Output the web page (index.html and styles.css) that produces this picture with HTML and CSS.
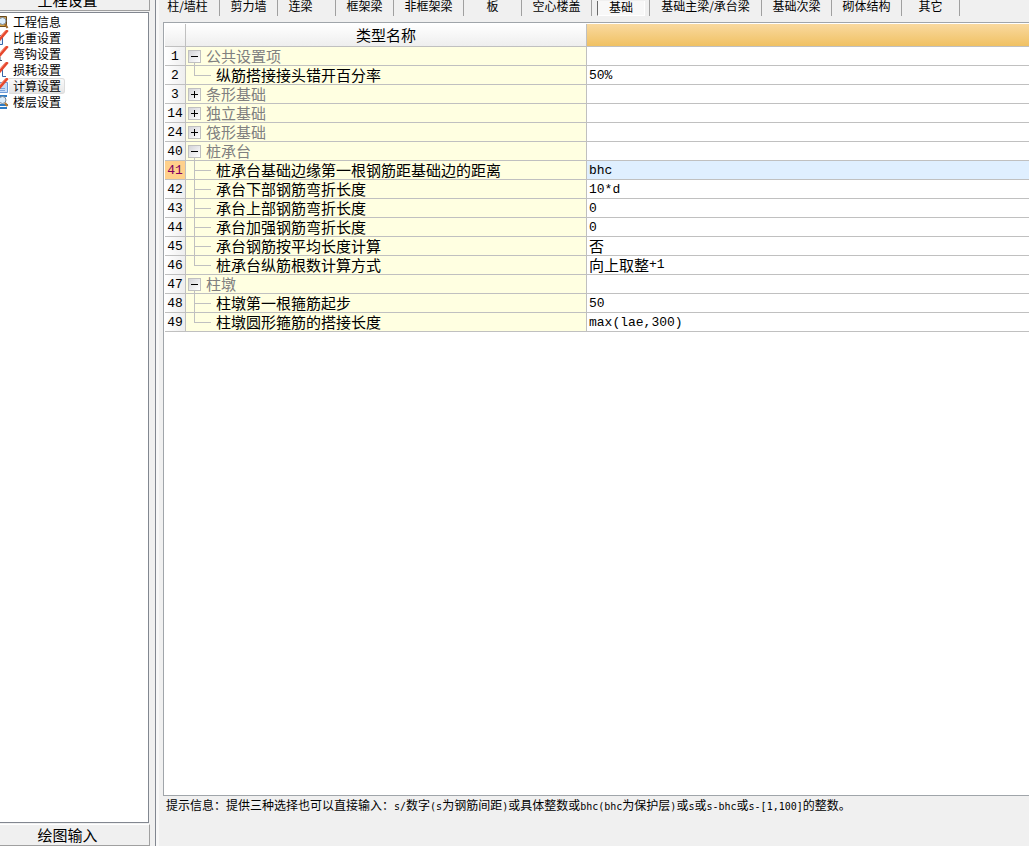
FILE: index.html
```
<!DOCTYPE html>
<html lang="zh-CN">
<head>
<meta charset="utf-8">
<title>工程设置</title>
<link rel="stylesheet" href="styles.css">
</head>
<body>
<div class="app">
  <aside class="sidebar">
    <button class="section-button section-top" type="button">工程设置</button>
    <nav class="side-list">
      <a class="side-item" href="#"><svg class="icon" viewBox="0 0 9 16"><path d="M-1 2.500h7.500v10H-1z" fill="#d8a64a" stroke="#6a4a1c"/><circle cx="2.500" cy="7" r="3.500" fill="#d9ecfb" stroke="#7c8795"/><path d="M5 10l2.500 4" stroke="#a06a28" stroke-width="2"/></svg><span>工程信息</span></a>
      <a class="side-item" href="#"><svg class="icon" viewBox="0 0 9 16"><path d="M-1 5.500h3.500v9H-1" fill="#e8f1fd" stroke="#3566a8"/><path d="M-1 10L7.500 0" stroke="#e6472d" stroke-width="3"/><path d="M-1 8l7-8" stroke="#f9a08a"/></svg><span>比重设置</span></a>
      <a class="side-item" href="#"><svg class="icon" viewBox="0 0 9 16"><path d="M0 11v3.500h2" fill="none" stroke="#42506a"/><path d="M-1 10L7.500 0" stroke="#e6472d" stroke-width="3"/><path d="M-1 8l7-8" stroke="#f9a08a"/></svg><span>弯钩设置</span></a>
      <a class="side-item" href="#"><svg class="icon" viewBox="0 0 9 16"><path d="M2.500 7v7.500h3.500" fill="none" stroke="#3566a8"/><path d="M-1 10L7.500 0" stroke="#e6472d" stroke-width="3"/><path d="M-1 8l7-8" stroke="#f9a08a"/></svg><span>损耗设置</span></a>
      <a class="side-item current" href="#"><svg class="icon" viewBox="0 0 9 16"><path d="M-1 4.500h8.500v10H-1z" fill="#c7dcf7" stroke="#6e9bd8"/><path d="M0 10.500h5M0 12.500h5" stroke="#7aa5dd"/><path d="M-1 10L7.500 0" stroke="#e6472d" stroke-width="3"/><path d="M-1 8l7-8" stroke="#f9a08a"/></svg><span>计算设置</span></a>
      <a class="side-item" href="#"><svg class="icon" viewBox="0 0 9 16"><path d="M0 2h7M0 11h8M0 14h7" stroke="#2d7bc4" stroke-width="2"/><circle cx="2.500" cy="6" r="3.500" fill="#d9ecfb" stroke="#7c8795"/><path d="M5 9l2.500 3" stroke="#b87a30" stroke-width="2"/></svg><span>楼层设置</span></a>
    </nav>
    <button class="section-button section-bottom" type="button">绘图输入</button>
  </aside>
  <main class="main">
    <div class="tabs" role="tablist">
      <button class="tab tab-first" type="button" role="tab">柱/墙柱</button>
      <button class="tab" type="button" role="tab">剪力墙</button>
      <button class="tab tab-start" type="button" role="tab">连梁</button>
      <button class="tab" type="button" role="tab">框架梁</button>
      <button class="tab tab-wide" type="button" role="tab">非框架梁</button>
      <button class="tab" type="button" role="tab">板</button>
      <button class="tab tab-wide" type="button" role="tab">空心楼盖</button>
      <button class="tab tab-selected" type="button" role="tab" aria-selected="true"><span>基础</span></button>
      <button class="tab tab-widest" type="button" role="tab">基础主梁/承台梁</button>
      <button class="tab tab-wide" type="button" role="tab">基础次梁</button>
      <button class="tab tab-wide" type="button" role="tab">砌体结构</button>
      <button class="tab" type="button" role="tab">其它</button>
    </div>
    <div class="frame">
      <table class="grid">
        <colgroup><col class="col-num"><col class="col-name"><col></colgroup>
        <thead><tr><th></th><th>类型名称</th><th class="active-head"></th></tr></thead>
        <tbody>
          <tr class="group"><th>1</th><td><div class="cell expanded"><button class="toggle open" type="button" aria-label="折叠"></button>公共设置项</div></td><td></td></tr>
          <tr><th>2</th><td><div class="cell"><i class="branch last"></i>纵筋搭接接头错开百分率</div></td><td class="value">50%</td></tr>
          <tr class="group"><th>3</th><td><div class="cell"><button class="toggle" type="button" aria-label="展开"></button>条形基础</div></td><td></td></tr>
          <tr class="group"><th>14</th><td><div class="cell"><button class="toggle" type="button" aria-label="展开"></button>独立基础</div></td><td></td></tr>
          <tr class="group"><th>24</th><td><div class="cell"><button class="toggle" type="button" aria-label="展开"></button>筏形基础</div></td><td></td></tr>
          <tr class="group"><th>40</th><td><div class="cell expanded"><button class="toggle open" type="button" aria-label="折叠"></button>桩承台</div></td><td></td></tr>
          <tr class="active"><th>41</th><td><div class="cell"><i class="branch"></i>桩承台基础边缘第一根钢筋距基础边的距离</div></td><td class="value">bhc</td></tr>
          <tr><th>42</th><td><div class="cell"><i class="branch"></i>承台下部钢筋弯折长度</div></td><td class="value">10*d</td></tr>
          <tr><th>43</th><td><div class="cell"><i class="branch"></i>承台上部钢筋弯折长度</div></td><td class="value">0</td></tr>
          <tr><th>44</th><td><div class="cell"><i class="branch"></i>承台加强钢筋弯折长度</div></td><td class="value">0</td></tr>
          <tr><th>45</th><td><div class="cell"><i class="branch"></i>承台钢筋按平均长度计算</div></td><td class="value"><div class="cell cjk">否</div></td></tr>
          <tr><th>46</th><td><div class="cell"><i class="branch last"></i>桩承台纵筋根数计算方式</div></td><td class="value"><div class="cell cjk">向上取整<span class="latin">+1</span></div></td></tr>
          <tr class="group"><th>47</th><td><div class="cell expanded"><button class="toggle open" type="button" aria-label="折叠"></button>柱墩</div></td><td></td></tr>
          <tr><th>48</th><td><div class="cell"><i class="branch"></i>柱墩第一根箍筋起步</div></td><td class="value">50</td></tr>
          <tr><th>49</th><td><div class="cell"><i class="branch last"></i>柱墩圆形箍筋的搭接长度</div></td><td class="value">max(lae,300)</td></tr>
        </tbody>
      </table>
    </div>
    <p class="hint">提示信息：提供三种选择也可以直接输入：<span class="code">s/</span>数字<span class="code">(s</span>为钢筋间距<span class="code">)</span>或具体整数或<span class="code">bhc(bhc</span>为保护层<span class="code">)</span>或<span class="code">s</span>或<span class="code">s-bhc</span>或<span class="code">s-[1,100]</span>的整数。</p>
  </main>
</div>
</body>
</html>
```
FILE: styles.css
```
* { box-sizing: border-box; }

body {
  margin: 0;
  background: #f0f0f0;
  color: #000;
  font: 12px/16px "Noto Sans CJK SC", sans-serif;
}

button {
  margin: 0;
  padding: 0;
  border: 0;
  background: none;
  color: inherit;
  font: inherit;
}

.app { display: flex; height: 100vh; overflow: hidden; }

.sidebar {
  flex: none;
  width: 150px;
  display: flex;
  flex-direction: column;
}

.section-button {
  flex: none;
  padding-right: 14px;
  border-right: 1px solid #a0a0a0;
  border-bottom: 1px solid #a0a0a0;
  font-size: 15px;
  line-height: 20px;
}

.section-top { height: 11px; display: flex; align-items: flex-end; justify-content: center; }
.section-bottom { height: 22px; border-top: 1px solid #fff; }

.side-list {
  flex: 1;
  margin: 1px 1px 1px 0;
  padding-top: 1px;
  border: 1px solid #828790;
  border-left: 0;
  background: #fff;
}

.side-item {
  display: flex;
  align-items: center;
  width: 65px;
  height: 16px;
  color: #000;
  text-decoration: none;
}

.side-item span { flex: 1; padding-left: 4px; line-height: 14px; }
.side-item.current span {
  border: 1px solid #dcdcdc;
  border-left: 0;
  border-radius: 0 3px 3px 0;
  background: linear-gradient(#fafafa, #e6e6e6);
}

.icon { flex: none; width: 9px; height: 16px; }

.main {
  flex: 1;
  min-width: 0;
  display: flex;
  flex-direction: column;
  margin-left: 5px;
  padding-left: 6px;
  border-left: 1px solid #828790;
  box-shadow: inset 3px 0 #f8f8f8;
}

.tabs { flex: none; display: flex; height: 16px; margin-bottom: 6px; }

.tab {
  flex: none;
  width: 58px;
  height: 16px;
  padding-bottom: 4px;
  border-right: 1px solid #a0a0a0;
  line-height: 12px;
  white-space: nowrap;
}

.tab-first { padding-right: 6px; }
.tab-start { padding-right: 12px; }
.tab-wide { width: 70px; }
.tab-widest { width: 112px; }
.tab-selected { padding: 0 4px 0 5px; }
.tab-selected span {
  display: block;
  height: 15px;
  border: solid #fff;
  border-width: 0 1px 1px 0;
  border-left: 1px solid #696969;
  background: #f8f8f8;
}

.frame {
  flex: 1;
  min-height: 0;
  margin-left: 1px;
  padding: 1px 0 0 1px;
  border: 1px solid #a0a5aa;
  border-right: 0;
  background: #fff;
}

.grid { width: 100%; table-layout: fixed; border-collapse: separate; border-spacing: 0; font-size: 15px; line-height: 18px; }
.col-num { width: 21px; }
.col-name { width: 401px; }

.grid th, .grid td {
  height: 19px;
  padding: 0;
  border-right: 1px solid #c0c0c0;
  border-bottom: 1px solid #c0c0c0;
  font-weight: normal;
  text-align: left;
  white-space: nowrap;
}
.grid tr > :last-child { border-right: 0; }

.grid thead th { height: 23px; background: linear-gradient(#fff, #eee); line-height: 20px; text-align: center; }
.grid thead .active-head { background: linear-gradient(#f9d99f, #f0c163); }
.grid tbody th {
  padding-top: 2px;
  background: linear-gradient(90deg, #fff, #eee);
  font: 13px/16px "Liberation Mono", monospace;
  text-align: center;
}
.grid td:nth-child(2) { background: #ffffe1; }
.grid tbody .active th { background: #ffd08b; color: #800060; }
.grid .active .value { background: #dfefff; }
.group { color: #808080; }
.group th { color: #000; }

.cell { display: flex; align-items: center; height: 18px; }
.cell.expanded { background: linear-gradient(#c0c0c0, #c0c0c0) 8px 100% / 1px 3px no-repeat; }
.value, .latin { font: 13px/16px "Liberation Mono", monospace; }
.grid .value { padding: 2px 0 0 2px; }
.grid .value:has(.cjk) { padding-top: 0; }
.cjk { font: 15px/18px "Noto Sans CJK SC", sans-serif; }

.toggle {
  flex: none;
  width: 13px;
  height: 13px;
  margin: 0 5px 0 2px;
  border: 1px solid #c0c0c0;
  background:
    linear-gradient(#000, #000) center / 7px 1px no-repeat,
    linear-gradient(#000, #000) center / 1px 7px no-repeat,
    linear-gradient(135deg, #d4d4d8, #fff);
}
.toggle.open {
  background:
    linear-gradient(#000, #000) center / 7px 1px no-repeat,
    linear-gradient(135deg, #d4d4d8, #fff);
}

.branch {
  flex: none;
  align-self: stretch;
  width: 17px;
  margin: 0 5px 0 8px;
  background:
    linear-gradient(#c0c0c0, #c0c0c0) 0 0 / 1px 100% no-repeat,
    linear-gradient(#c0c0c0, #c0c0c0) 0 9px / 100% 1px no-repeat;
}
.branch.last {
  background:
    linear-gradient(#c0c0c0, #c0c0c0) 0 0 / 1px 10px no-repeat,
    linear-gradient(#c0c0c0, #c0c0c0) 0 9px / 100% 1px no-repeat;
}

.hint { flex: none; height: 50px; margin: 0; padding: 1px 0 0 4px; white-space: nowrap; }
.code { font-family: "DejaVu Sans Mono", monospace; font-size: 10px; }
```
